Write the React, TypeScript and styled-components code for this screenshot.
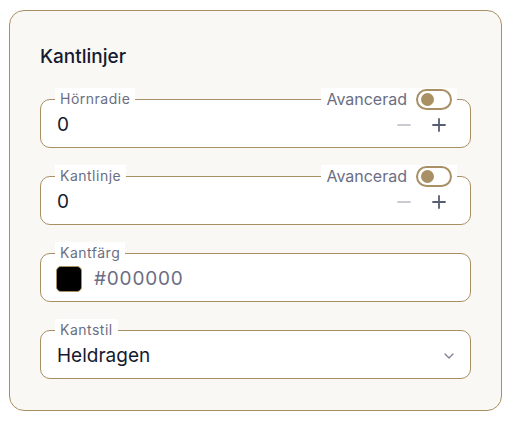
import React, { useState } from 'react';
import styled, { createGlobalStyle } from 'styled-components';

const GlobalStyle = createGlobalStyle`
  body {
    margin: 0;
    background: #ffffff;
    font-family: Inter, "Noto Sans", sans-serif;
  }
`

const gold = '#a88f64'

export default function App() {
  return (
    <>
      <GlobalStyle />
      <Card>
        <Title>Kantlinjer</Title>
        <Fields>
          <NumberField label="Hörnradie" />
          <NumberField label="Kantlinje" />
          <Field>
            <FloatLabel>Kantfärg</FloatLabel>
            <Swatch />
            <ColorText>#000000</ColorText>
          </Field>
          <Field>
            <FloatLabel>Kantstil</FloatLabel>
            <Value>Heldragen</Value>
            <Chevron width="10" height="6" viewBox="0 0 10 6">
              <path d="M1 1l4 4 4-4" fill="none" stroke="#7a7d90" strokeWidth="1.2" strokeLinecap="round" strokeLinejoin="round" />
            </Chevron>
          </Field>
        </Fields>
      </Card>
    </>
  );
}

const NumberField = ({ label }: { label: string }) => {
  const [on, setOn] = useState(false)
  return (
    <Field>
      <FloatLabel>{label}</FloatLabel>
      <Advanced>
        Avancerad
        <Toggle $on={on} onClick={() => setOn(!on)}>
          <Knob $on={on} />
        </Toggle>
      </Advanced>
      <Value>0</Value>
      <Stepper>
        <StepButton $muted>
          <svg width="14" height="14" viewBox="0 0 14 14">
            <path d="M1 7h12" stroke="currentColor" strokeWidth="1.8" strokeLinecap="round" />
          </svg>
        </StepButton>
        <StepButton>
          <svg width="14" height="14" viewBox="0 0 14 14">
            <path d="M1 7h12M7 1v12" stroke="currentColor" strokeWidth="1.8" strokeLinecap="round" />
          </svg>
        </StepButton>
      </Stepper>
    </Field>
  )
}

const Card = styled.section`
  margin: 10px 0 0 9px;
  width: 493px;
  box-sizing: border-box;
  padding: 34px 30px 31px 30px;
  background: #faf8f4;
  border: 1px solid ${gold};
  border-radius: 15px;
`

const Title = styled.h2`
  margin: 0 0 30px;
  font-size: 19px;
  line-height: 24px;
  font-weight: 500;
  color: #161a2e;
`

const Fields = styled.div`
  display: flex;
  flex-direction: column;
  gap: 28px;
`

const Field = styled.div`
  position: relative;
  display: flex;
  align-items: center;
  height: 49px;
  box-sizing: border-box;
  padding: 2px 16px 0 15px;
  background: #ffffff;
  border: 1px solid ${gold};
  border-radius: 10px;
`

const FloatLabel = styled.span`
  position: absolute;
  top: -12px;
  left: 14px;
  padding: 0 5px;
  background: #ffffff;
  font-size: 14px;
  line-height: 22px;
  letter-spacing: 0.5px;
  color: #6b6e82;
`

const Advanced = styled.div`
  position: absolute;
  top: -12px;
  right: 13px;
  display: flex;
  align-items: center;
  gap: 9px;
  height: 22px;
  padding: 0 5px;
  background: #ffffff;
  font-size: 16px;
  color: #6b6e82;
`

const Toggle = styled.button<{ $on: boolean }>`
  display: flex;
  align-items: center;
  width: 36px;
  height: 21px;
  box-sizing: border-box;
  padding: 0 3px;
  border: 2px solid ${gold};
  border-radius: 11px;
  background: ${p => (p.$on ? gold : '#ffffff')};
  cursor: pointer;
`

const Knob = styled.span<{ $on: boolean }>`
  width: 13px;
  height: 13px;
  border-radius: 50%;
  background: ${p => (p.$on ? '#ffffff' : gold)};
  margin-left: ${p => (p.$on ? '14px' : '0')};
`

const Value = styled.span`
  flex: 1;
  padding-left: 1px;
  font-size: 19px;
  color: #161a2e;
`

const Stepper = styled.div`
  display: flex;
  align-items: center;
  gap: 21px;
  margin-right: 8px;
`

const StepButton = styled.button<{ $muted?: boolean }>`
  display: flex;
  padding: 0;
  border: none;
  background: none;
  color: ${p => (p.$muted ? '#c9cbd2' : '#585d72')};
  cursor: pointer;
`

const Swatch = styled.span`
  width: 26px;
  height: 26px;
  box-sizing: border-box;
  margin-right: 12px;
  border: 1px solid ${gold};
  border-radius: 5px;
  background: #000000;
`

const ColorText = styled.span`
  font-size: 19px;
  letter-spacing: 0.8px;
  color: #6b6e82;
`

const Chevron = styled.svg`
  flex-shrink: 0;
`
